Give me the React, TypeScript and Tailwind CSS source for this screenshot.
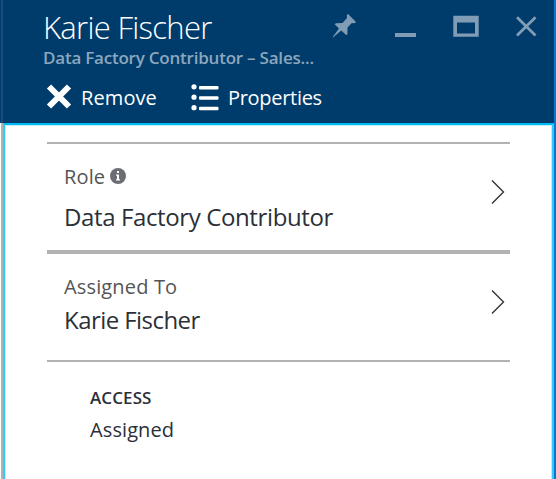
import type { ReactNode } from "react";

function Chevron() {
  return (
    <svg className="mt-4 h-6 w-3.5 shrink-0" viewBox="0 0 14 24" fill="none" stroke="#33343c" strokeWidth="1.4">
      <path d="M1 0.5 L12.5 12 L1 23.5" />
    </svg>
  );
}

function WindowControls() {
  return (
    <svg className="h-[26px] w-[208px] shrink-0" viewBox="330 13 208 26" fill="#809db5">
      <path d="M348 14 L356 22 L354.5 23.2 L351.8 23 L347.5 27.5 L347.4 34.5 L346.2 35 L341.2 30.5 L333 37.5 L332.7 36.9 L339 28.5 L334.7 24.2 L336 23.2 L342.5 23.1 L347 18 L346.8 15 Z" />
      <path d="M395 33h21v4h-21z" />
      <path fillRule="evenodd" d="M453.3 15.7h25.4v21.1h-25.4z M457 22.6v10.8h18v-10.8z" />
      <path d="M517 17.3 L535.5 35.5 M535.5 17.3 L517 35.5" fill="none" stroke="#809db5" strokeWidth="2.8" />
    </svg>
  );
}

function Row({ children }: { children: ReactNode }) {
  return (
    <section className="flex h-[106px] items-start justify-between pt-5 pr-[5px] pl-[17px]">
      <div>{children}</div>
      <Chevron />
    </section>
  );
}

export default function App() {
  return (
    <div className="flex h-[479px] w-[556px] flex-col overflow-hidden border-r-2 border-[#0078d7] bg-white font-['Open_Sans','Noto_Sans',sans-serif] whitespace-nowrap text-[#2b2f38]">
      <header className="flex h-[123px] shrink-0 bg-[#003c6b] text-white">
        <div className="ml-px w-0.5 bg-[#1c4d7a]" />
        <div className="flex-1 pl-10 pt-[9px]">
          <div className="flex h-9 justify-between pr-4">
            <h1 className="text-[31px] leading-9 font-light tracking-[-0.7px]">Karie Fischer</h1>
            <div className="pt-1"><WindowControls /></div>
          </div>
          <p className="mt-0.5 text-[17px] leading-[22px] font-semibold tracking-[-0.22px] text-[#8ca7bd]">Data Factory Contributor – Sales...</p>
          <nav className="mt-3.5 flex h-7 items-center text-[20px] leading-7">
            <button className="flex items-center">
              <svg className="ml-[3px] mr-2 h-7 w-[27px]" viewBox="0 0 27 28" fill="none" stroke="white" strokeWidth="6">
                <path d="M3 3.5 L23 23.5 M23 3.5 L3 23.5" />
              </svg>
              <span className="w-[76px] pt-px text-left tracking-[0.1px]">Remove</span>
            </button>
            <button className="ml-[34px] flex items-center">
              <svg className="mr-[9px] h-7 w-7" viewBox="0 0 28 28" fill="white">
                <circle cx="3" cy="3.8" r="2.6" /><circle cx="3" cy="14.2" r="2.6" /><circle cx="3" cy="24.7" r="2.6" />
                <rect x="8" y="3" width="19.5" height="3.5" rx="1" />
                <rect x="8" y="13.3" width="19.5" height="3.5" rx="1" />
                <rect x="8" y="23.7" width="19.5" height="3.5" rx="1" />
              </svg>
              <span className="pt-px tracking-[-0.3px]">Properties</span>
            </button>
          </nav>
        </div>
      </header>
      <div className="flex min-h-0 flex-1">
        <div className="ml-px w-0.5 bg-[#b2b2b2]" />
        <main className="flex-1 border-x-2 border-t-2 border-x-[#35c9f3] border-t-[#00b9f2] pl-[42px] pr-[42px] pt-[17px] shadow-[inset_1px_1px_0_#baf0fc,inset_-1px_0_0_#baf0fc]">
          <div className="h-0.5 bg-[#b2b2b2]" />
          <Row>
            <div className="flex h-[26px] items-center gap-[5px]">
              <span className="w-[41px] text-[20px] leading-[26px] tracking-[0.15px] text-[#555]">Role</span>
              <svg className="-mt-0.5 h-4 w-4" viewBox="0 0 16 16">
                <circle cx="8" cy="8" r="8" fill="#6b6d74" />
                <path d="M7 3h2v2H7z M6 6.4h3v4.8h1v1.3H6v-1.3h1V7.7H6z" fill="white" />
              </svg>
            </div>
            <div className="mt-[11px] text-[24px] leading-8 tracking-[-0.38px]">Data Factory Contributor</div>
          </Row>
          <div className="h-1 bg-[#b2b2b2]" />
          <Row>
            <div className="text-[20px] leading-[26px] tracking-[0.15px] text-[#555]">Assigned To</div>
            <div className="mt-1 text-[24px] leading-8 tracking-[-0.56px]">Karie Fischer</div>
          </Row>
          <div className="h-0.5 bg-[#b2b2b2]" />
          <section className="pl-[43px] pt-[25px]">
            <h2 className="text-[17px] leading-[22px] font-semibold tracking-[0.1px]">ACCESS</h2>
            <p className="mt-2 text-[20px] leading-[26px] tracking-[0.1px]">Assigned</p>
          </section>
        </main>
      </div>
    </div>
  );
}
